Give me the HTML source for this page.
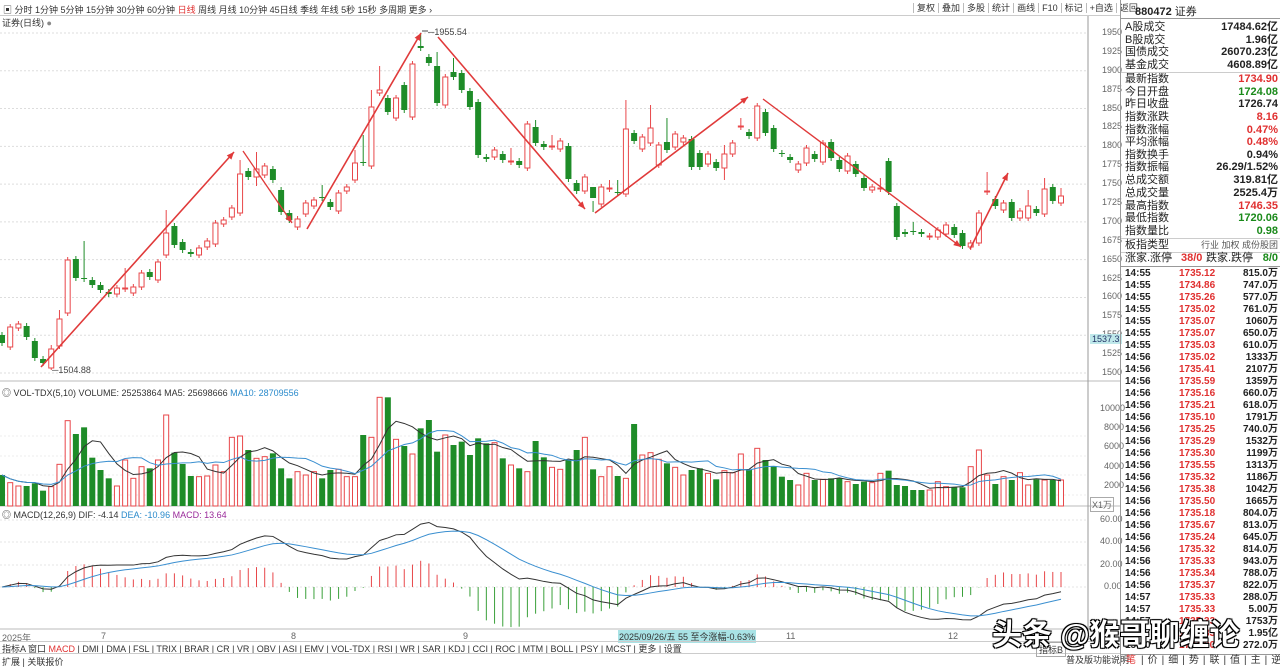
<!DOCTYPE html>
<html><head><meta charset="utf-8">
<style>
*{margin:0;padding:0;box-sizing:border-box}
body{width:1280px;height:666px;overflow:hidden;background:#fff;font-family:"Liberation Sans","Noto Sans CJK SC",sans-serif;color:#222;position:relative}
.a{position:absolute;white-space:nowrap}
.tb{font-size:9px;top:3px;color:#333}
.rp{position:absolute;left:1120px;top:0;width:160px;height:666px;border-left:1px solid #999;font-size:11px}
.row{position:absolute;left:4px;right:2px;height:13px;line-height:13px}
.row .l{position:absolute;left:0;color:#222}
.row .v{position:absolute;right:0;font-weight:bold}
.red{color:#e03030}.grn{color:#1a8a1a}
.tk{position:absolute;left:4px;right:2px;height:12px;line-height:12px;font-size:10px;font-weight:bold}
.tk .t{position:absolute;left:0}.tk .p{position:absolute;left:54px;color:#e03030}.tk .q{position:absolute;right:0}
.ax{font-size:9px;color:#666;position:absolute;left:1100px}
</style></head><body>
<div class="a tb" style="left:3px">▣ 分时 1分钟 5分钟 15分钟 30分钟 60分钟 <span style="color:#e03030">日线</span> 周线 月线 10分钟 45日线 季线 年线 5秒 15秒 多周期 更多 ›</div>
<div class="a" style="left:913px;top:1px;font-size:9px;color:#333">
<span style="border-left:1px solid #bbb;padding:0 3px">复权</span><span style="border-left:1px solid #bbb;padding:0 3px">叠加</span><span style="border-left:1px solid #bbb;padding:0 3px">多股</span><span style="border-left:1px solid #bbb;padding:0 3px">统计</span><span style="border-left:1px solid #bbb;padding:0 3px">画线</span><span style="border-left:1px solid #bbb;padding:0 3px">F10</span><span style="border-left:1px solid #bbb;padding:0 3px">标记</span><span style="border-left:1px solid #bbb;padding:0 3px">+自选</span><span style="border-left:1px solid #bbb;padding:0 3px">返回</span></div>
<div class="a" style="left:2px;top:16px;font-size:9px;color:#333">证券(日线) <span style="color:#888">●</span></div>
<div class="a" style="left:0;top:15px;width:1120px;border-top:1px solid #ccc"></div>

<svg id="ch" class="a" style="left:0;top:0" width="1120" height="666"></svg>

<div id="pax"></div>
<div class="a" style="left:1090px;top:334px;background:#bfe8ea;font-size:9px;padding:0 2px;color:#236">1537.3</div>
<div class="ax" style="top:403px">10000</div><div class="ax" style="top:422px;left:1104px">8000</div><div class="ax" style="top:441px;left:1104px">6000</div><div class="ax" style="top:461px;left:1104px">4000</div><div class="ax" style="top:480px;left:1104px">2000</div>
<div class="a" style="left:1090px;top:497px;font-size:9px;color:#666;border:1px solid #aaa;padding:0 1px">X1万</div>
<div class="ax" style="top:514px">60.00</div><div class="ax" style="top:536px">40.00</div><div class="ax" style="top:559px">20.00</div><div class="ax" style="top:581px;left:1104px">0.00</div>

<div class="a" style="left:2px;top:386px;font-size:9px;color:#333">◎ VOL-TDX(5,10) VOLUME: 25253864 MA5: 25698666 <span style="color:#2a8acb">MA10: 28709556</span></div>
<div class="a" style="left:2px;top:508px;font-size:9px;color:#333">◎ MACD(12,26,9) DIF: -4.14 <span style="color:#2a8acb">DEA: -10.96</span> <span style="color:#9a2a9a">MACD: 13.64</span></div>

<div class="a" style="left:2px;top:631px;font-size:9px;color:#666">2025年</div>
<div class="a" style="left:101px;top:631px;font-size:9px;color:#666">7</div>
<div class="a" style="left:291px;top:631px;font-size:9px;color:#666">8</div>
<div class="a" style="left:463px;top:631px;font-size:9px;color:#666">9</div>
<div class="a" style="left:786px;top:631px;font-size:9px;color:#666">11</div>
<div class="a" style="left:948px;top:631px;font-size:9px;color:#666">12</div>
<div class="a" style="left:618px;top:630px;font-size:9px;background:#a9e3e6;color:#333;padding:0 1px">2025/09/26/五 55 至今涨幅-0.63%</div>
<div class="a" style="left:0;top:641px;width:1120px;border-top:1px solid #ccc"></div>
<div class="a" style="left:2px;top:642px;font-size:9px;color:#333">指标A 窗口 <span style="color:#e03030">MACD</span> | DMI | DMA | FSL | TRIX | BRAR | CR | VR | OBV | ASI | EMV | VOL-TDX | RSI | WR | SAR | KDJ | CCI | ROC | MTM | BOLL | PSY | MCST | 更多 | 设置</div>
<div class="a" style="left:0;top:653px;width:1120px;border-top:1px solid #ccc"></div>
<div class="a" style="left:2px;top:655px;font-size:9px;color:#333">扩展 | 关联报价</div>
<div class="a" style="left:1036px;top:642px;font-size:9px;color:#333;border:1px solid #aaa;padding:0 2px">指标B</div>
<div class="a" style="left:1066px;top:653px;font-size:9px;color:#333">普及版功能说明</div>

<div class="rp">
<div class="a" style="left:14px;top:3px;font-size:11px;font-weight:bold">880472 <span style="font-weight:normal">证券</span></div>
<div class="a" style="left:0;top:18px;width:160px;border-top:1px solid #999"></div>
<div id="rows"></div>
<div class="a" style="left:0;top:654px;width:160px;border-top:1px solid #999;font-size:10px;height:12px;line-height:12px;color:#333">
<span style="padding:0 5px;color:#e03030">笔</span>|<span style="padding:0 4px">价</span>|<span style="padding:0 4px">细</span>|<span style="padding:0 4px">势</span>|<span style="padding:0 4px">联</span>|<span style="padding:0 4px">值</span>|<span style="padding:0 4px">主</span>|<span style="padding:0 4px">逆</span>|<span style="padding:0 4px">筹</span></div>
</div>

<div class="a" style="left:992px;top:610px;font-size:30px;font-weight:bold;color:#fff;text-shadow:-1px -1px 0 #000,1px -1px 0 #000,-1px 1px 0 #000,1px 1px 0 #000,0 0 2px #000">头条 @猴哥聊缠论</div>

<script>
var NS="http://www.w3.org/2000/svg",svg=document.getElementById('ch');
function el(t,a){var e=document.createElementNS(NS,t);for(var k in a)e.setAttribute(k,a[k]);svg.appendChild(e);return e;}
for(var p=1950;p>=1500;p-=50){var y=33+(1950-p)*0.7556;el('line',{x1:0,x2:1088,y1:y,y2:y,stroke:'#ddd','stroke-dasharray':'2,2'});}
[381,506,629].forEach(function(y){el('line',{x1:0,x2:1120,y1:y,y2:y,stroke:'#bbb'})});
[436,456,475,495].forEach(function(y){el('line',{x1:0,x2:1088,y1:y,y2:y,stroke:'#eee','stroke-dasharray':'2,2'});});
[520,542,565,587].forEach(function(y){el('line',{x1:0,x2:1088,y1:y,y2:y,stroke:'#e4e4e4','stroke-dasharray':'2,2'});});
el('line',{x1:1088,x2:1088,y1:16,y2:640,stroke:'#999'});
var pax='';for(var p=1950;p>=1500;p-=25){var y=33+(1950-p)*0.7556;pax+='<div class="ax" style="top:'+(y-6)+'px;left:1102px">'+p+'</div>';}
document.getElementById('pax').innerHTML=pax;
var C=[[335,343,'g'],[327,347,'r'],[324,328,'r'],[326,337,'g'],[341,358,'g'],[359,363,'g'],[349,368,'r',345,370],[319,346,'r',310],[260,313,'r'],[259,278,'g'],[278,279,'g',241],[280,285,'g'],[285,290,'g'],[292,294,'g'],[288,294,'r'],[288,289,'r',268],[287,293,'r'],[273,287,'r'],[272,277,'g'],[262,280,'r'],[233,255,'r',210],[226,245,'g'],[242,250,'g'],[252,254,'g'],[248,255,'r'],[241,247,'r'],[223,244,'r'],[220,224,'r'],[208,217,'r'],[174,213,'r',160],[171,177,'g'],[169,177,'r',152,186],[166,175,'r'],[169,180,'g'],[190,212,'g'],[213,220,'g'],[219,227,'r'],[203,214,'r'],[200,206,'r'],[197,198,'g',185],[202,207,'g'],[193,211,'r'],[187,191,'r'],[163,180,'r',150],[162,163,'g',135],[107,166,'r',90],[90,93,'r',66],[98,112,'g'],[98,118,'r'],[85,110,'g'],[64,117,'r'],[46,48,'g',33],[57,63,'g'],[66,103,'g',52],[77,105,'r'],[72,77,'g',58],[73,90,'g'],[91,107,'g'],[102,155,'g'],[157,159,'g'],[150,157,'r'],[154,160,'g'],[161,162,'r',148],[161,165,'g'],[124,168,'r'],[127,143,'g',120],
[144,147,'g'],[146,147,'r',135],[141,149,'r'],[146,179,'g'],[183,191,'g'],[177,191,'r'],[187,198,'g',212],[187,204,'r'],[188,189,'r',180],[192,193,'g',180],[129,194,'r',100],[133,141,'g'],[137,149,'r'],[128,143,'r',105],[145,165,'r'],[142,150,'g',118],[134,147,'r'],[138,142,'r'],[139,167,'g'],[153,167,'g'],[154,164,'r'],[162,168,'g'],[154,168,'r',145,180],[143,154,'r'],[126,127,'r',118],[132,136,'g'],[106,138,'r'],[112,133,'g'],[128,149,'g'],[153,154,'g'],[157,160,'g'],[164,170,'r'],[148,163,'r'],[154,159,'g'],[143,162,'r'],[142,158,'g'],[160,169,'g'],[156,171,'r'],[164,174,'g'],[178,188,'g'],[187,190,'r'],[188,189,'r',178],[161,192,'g'],[206,237,'g'],[232,234,'g'],[231,232,'g',222],[232,234,'g'],[236,237,'r'],[230,237,'r'],[225,234,'r'],[227,235,'g'],[233,246,'g'],[243,247,'r'],[213,243,'r'],[191,192,'r',172],[199,206,'g'],[203,210,'r'],[202,218,'g'],[211,218,'r'],[206,218,'r',190],[209,213,'g'],[189,214,'r',178],[187,201,'g'],[196,203,'r',188]];
var SP=1059/(C.length-1);
function X(i){return 2+i*SP;}
var R='#e8474a',G='#1e8c28',closes=[];
C.forEach(function(c,i){var x=X(i);var hi=c[3]||c[0]-3,lo=c[4]||c[1]+3;var col=c[2]=='r'?R:G;
el('line',{x1:x,x2:x,y1:hi,y2:lo,stroke:col});
if(c[2]=='r')el('rect',{x:x-2.5,y:c[0],width:5,height:Math.max(1,c[1]-c[0]),fill:'#fff',stroke:col});
else el('rect',{x:x-3,y:c[0],width:6,height:Math.max(1,c[1]-c[0]),fill:col});
var cy=c[2]=='r'?c[0]:c[1];closes.push(1950-(cy-33)/0.7556);});
function arr(x1,y1,x2,y2,w,head){el('line',{x1:x1,y1:y1,x2:x2,y2:y2,stroke:'#e03a3a','stroke-width':w});
if(head){var a=Math.atan2(y2-y1,x2-x1),L=8,s=0.4;el('polygon',{points:x2+','+y2+' '+(x2-L*Math.cos(a-s))+','+(y2-L*Math.sin(a-s))+' '+(x2-L*Math.cos(a+s))+','+(y2-L*Math.sin(a+s)),fill:'#e03a3a'});}}
arr(41,367,234,152,1.6,1);arr(243,151,292,223,1.3,1);arr(307,229,421,33,1.6,1);arr(438,37,585,209,1.6,1);arr(595,213,748,97,1.6,1);arr(763,99,961,247,1.4,1);arr(970,249,1008,173,1.6,1);
function tx(x,y,s){var t=el('text',{x:x,y:y,'font-size':9,fill:'#444','font-family':'Liberation Sans'});t.textContent=s;}
tx(428,35,'─1955.54');el('line',{x1:422,y1:31,x2:428,y2:31,stroke:'#444'});
tx(52,373,'─1504.88');
var V=[285,308,318,318,310,332,320,253,122,162,142,233,270,295,318,240,295,260,265,240,105,218,252,288,290,288,255,275,172,168,210,235,230,220,265,295,275,285,275,295,270,268,290,290,165,172,52,52,178,198,222,145,120,215,165,195,185,225,175,190,188,235,255,265,275,183,232,262,268,240,210,172,268,290,260,288,295,132,225,218,238,250,262,285,270,265,280,298,272,278,222,270,205,240,258,290,300,315,280,300,298,295,295,305,312,305,308,280,272,315,318,330,330,330,305,320,322,322,260,210,285,312,290,300,278,315,298,300,300,300];
var VS=1059/(V.length-1);
var vv=[];V.forEach(function(v,i){var x=2+i*VS,top=380+v/3,c=C[i]?C[i][2]:'r';vv.push(506-top);
if(c=='r')el('rect',{x:x-2.5,y:top,width:5,height:506-top,fill:'#fff',stroke:R});else el('rect',{x:x-3,y:top,width:6,height:506-top,fill:G});});
function ma(a,n){return a.map(function(_,i){var s=0,k=0;for(var j=Math.max(0,i-n+1);j<=i;j++){s+=a[j];k++;}return s/k;});}
function pl(a,f,col,sp){var d='';a.forEach(function(v,i){d+=(i?'L':'M')+(2+i*sp)+','+f(v);});el('path',{d:d,fill:'none',stroke:col,'stroke-width':1});}
pl(ma(vv,5),function(v){return 506-v},'#333',VS);pl(ma(vv,10),function(v){return 506-v},'#3a8fd0',VS);
function ema(a,n){var k=2/(n+1),o=[],e=a[0];a.forEach(function(v){e=e+k*(v-e);o.push(e);});return o;}
var pre=[];for(var i=0;i<30;i++)pre.push(1540);var cl=pre.concat(closes);
var e12=ema(cl,12),e26=ema(cl,26),dif=e12.map(function(v,i){return v-e26[i]}),dea=ema(dif,9);
dif=dif.slice(30);dea=dea.slice(30);
function my(v){return 587-v*1.1;}
dif.forEach(function(d,i){var h=2*(d-dea[i]);var x=X(i);el('line',{x1:x,x2:x,y1:587,y2:my(h),stroke:h>0?'#e8474a':'#3aa03a'});});
pl(dif,my,'#333',SP);pl(dea,my,'#3a8fd0',SP);
var rows=[['A股成交','17484.62亿',''],['B股成交','1.96亿',''],['国债成交','26070.23亿',''],['基金成交','4608.89亿',''],['最新指数','1734.90','red'],['今日开盘','1724.08','grn'],['昨日收盘','1726.74',''],['指数涨跌','8.16','red'],['指数涨幅','0.47%','red'],['平均涨幅','0.48%','red'],['指数换手','0.94%',''],['指数振幅','26.29/1.52%',''],['总成交额','319.81亿',''],['总成交量','2525.4万',''],['最高指数','1746.35','red'],['最低指数','1720.06','grn'],['指数量比','0.98','grn']];
var ys=[21,34,46,59,73,86,98,111,124,136,149,161,174,187,200,212,225];var h='';
rows.forEach(function(r,i){h+='<div class="row" style="top:'+ys[i]+'px"><span class="l">'+r[0]+'</span><span class="v '+r[2]+'">'+r[1]+'</span></div>';});
h+='<div class="a" style="left:0;top:72px;width:160px;border-top:1px solid #ccc"></div>';
h+='<div class="a" style="left:0;top:238px;width:160px;border-top:1px solid #ccc"></div>';
h+='<div class="row" style="top:239px"><span class="l">板指类型</span><span style="position:absolute;right:0;font-size:9px;color:#555">行业 加权 成份股团</span></div>';
h+='<div class="a" style="left:0;top:252px;width:160px;border-top:1px solid #ccc"></div>';
h+='<div class="row" style="top:252px"><span class="l">涨家.涨停</span><span class="red" style="position:absolute;left:56px;font-weight:bold">38/0</span><span style="position:absolute;left:81px">跌家.跌停</span><span class="v grn">8/0</span></div>';
h+='<div class="a" style="left:0;top:266px;width:160px;border-top:1px solid #999"></div>';
var T=[['14:55','1735.12','815.0万'],['14:55','1734.86','747.0万'],['14:55','1735.26','577.0万'],['14:55','1735.02','761.0万'],['14:55','1735.07','1060万'],['14:55','1735.07','650.0万'],['14:55','1735.03','610.0万'],['14:56','1735.02','1333万'],['14:56','1735.41','2107万'],['14:56','1735.59','1359万'],['14:56','1735.16','660.0万'],['14:56','1735.21','618.0万'],['14:56','1735.10','1791万'],['14:56','1735.25','740.0万'],['14:56','1735.29','1532万'],['14:56','1735.30','1199万'],['14:56','1735.55','1313万'],['14:56','1735.32','1186万'],['14:56','1735.38','1042万'],['14:56','1735.50','1665万'],['14:56','1735.18','804.0万'],['14:56','1735.67','813.0万'],['14:56','1735.24','645.0万'],['14:56','1735.32','814.0万'],['14:56','1735.33','943.0万'],['14:56','1735.34','788.0万'],['14:56','1735.37','822.0万'],['14:57','1735.33','288.0万'],['14:57','1735.33','5.00万'],['14:57','1735.33','1753万'],['14:57','1735.33','1.95亿'],['15:00','1734.90','272.0万']];
T.forEach(function(t,i){h+='<div class="tk" style="top:'+(268+i*12)+'px"><span class="t">'+t[0]+'</span><span class="p">'+t[1]+'</span><span class="q">'+t[2]+'</span></div>';});
document.getElementById('rows').innerHTML=h;
</script>
</body></html>
